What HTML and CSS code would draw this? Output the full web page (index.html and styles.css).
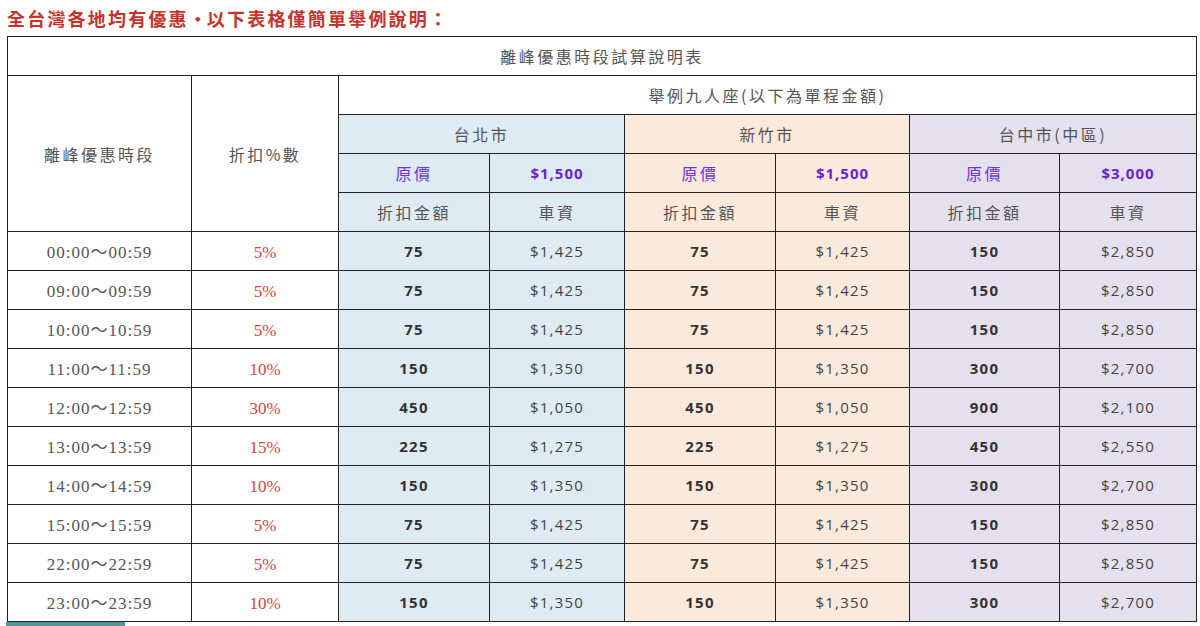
FILE: index.html
```html
<!DOCTYPE html>
<html lang="zh-Hant">
<head>
<meta charset="utf-8">
<title>離峰優惠時段試算說明表</title>
<link rel="stylesheet" href="styles.css">
</head>
<body>
<div class="page">
  <h2 class="notice">全台灣各地均有優惠<span class="dot">·</span>以下表格僅簡單舉例說明：</h2>
  <table class="fare">
    <colgroup>
      <col class="c-time"><col class="c-pct">
      <col class="c-a"><col class="c-b"><col class="c-a"><col class="c-b2"><col class="c-a2"><col class="c-b3">
    </colgroup>
    <tr><td colspan="8" class="hd">離峰優惠時段試算說明表</td></tr>
    <tr>
      <td rowspan="4" class="hd">離峰優惠時段</td>
      <td rowspan="4" class="hd">折扣%數</td>
      <td colspan="6" class="hd">舉例九人座(以下為單程金額)</td>
    </tr>
    <tr>
      <td colspan="2" class="hd blue">台北市</td>
      <td colspan="2" class="hd peach">新竹市</td>
      <td colspan="2" class="hd lav">台中市(中區)</td>
    </tr>
    <tr>
      <td class="hd blue purple">原價</td><td class="blue price">$1,500</td>
      <td class="hd peach purple">原價</td><td class="peach price">$1,500</td>
      <td class="hd lav purple">原價</td><td class="lav price">$3,000</td>
    </tr>
    <tr>
      <td class="hd blue">折扣金額</td><td class="hd blue">車資</td>
      <td class="hd peach">折扣金額</td><td class="hd peach">車資</td>
      <td class="hd lav">折扣金額</td><td class="hd lav">車資</td>
    </tr>
    <tr><td class="time">00:00～00:59</td><td class="pct">5%</td><td class="blue disc">75</td><td class="blue num">$1,425</td><td class="peach disc">75</td><td class="peach num">$1,425</td><td class="lav disc">150</td><td class="lav num">$2,850</td></tr>
    <tr><td class="time">09:00～09:59</td><td class="pct">5%</td><td class="blue disc">75</td><td class="blue num">$1,425</td><td class="peach disc">75</td><td class="peach num">$1,425</td><td class="lav disc">150</td><td class="lav num">$2,850</td></tr>
    <tr><td class="time">10:00～10:59</td><td class="pct">5%</td><td class="blue disc">75</td><td class="blue num">$1,425</td><td class="peach disc">75</td><td class="peach num">$1,425</td><td class="lav disc">150</td><td class="lav num">$2,850</td></tr>
    <tr><td class="time">11:00～11:59</td><td class="pct">10%</td><td class="blue disc">150</td><td class="blue num">$1,350</td><td class="peach disc">150</td><td class="peach num">$1,350</td><td class="lav disc">300</td><td class="lav num">$2,700</td></tr>
    <tr><td class="time">12:00～12:59</td><td class="pct">30%</td><td class="blue disc">450</td><td class="blue num">$1,050</td><td class="peach disc">450</td><td class="peach num">$1,050</td><td class="lav disc">900</td><td class="lav num">$2,100</td></tr>
    <tr><td class="time">13:00～13:59</td><td class="pct">15%</td><td class="blue disc">225</td><td class="blue num">$1,275</td><td class="peach disc">225</td><td class="peach num">$1,275</td><td class="lav disc">450</td><td class="lav num">$2,550</td></tr>
    <tr><td class="time">14:00～14:59</td><td class="pct">10%</td><td class="blue disc">150</td><td class="blue num">$1,350</td><td class="peach disc">150</td><td class="peach num">$1,350</td><td class="lav disc">300</td><td class="lav num">$2,700</td></tr>
    <tr><td class="time">15:00～15:59</td><td class="pct">5%</td><td class="blue disc">75</td><td class="blue num">$1,425</td><td class="peach disc">75</td><td class="peach num">$1,425</td><td class="lav disc">150</td><td class="lav num">$2,850</td></tr>
    <tr><td class="time">22:00～22:59</td><td class="pct">5%</td><td class="blue disc">75</td><td class="blue num">$1,425</td><td class="peach disc">75</td><td class="peach num">$1,425</td><td class="lav disc">150</td><td class="lav num">$2,850</td></tr>
    <tr><td class="time">23:00～23:59</td><td class="pct">10%</td><td class="blue disc">150</td><td class="blue num">$1,350</td><td class="peach disc">150</td><td class="peach num">$1,350</td><td class="lav disc">300</td><td class="lav num">$2,700</td></tr>
  </table>
  <div class="accent"></div>
</div>
</body>
</html>
```

FILE: styles.css
```css
html, body {
  margin: 0;
  padding: 0;
  background: #ffffff;
}
.page {
  padding: 4px 5px 0 7px;
}
.notice {
  margin: 0 0 4px 0;
  font-family: "Noto Sans CJK TC", "Noto Sans", sans-serif;
  font-size: 18px;
  line-height: 28px;
  font-weight: 700;
  letter-spacing: 2.2px;
  color: #c8322c;
}
.dot {
  display: inline-block;
  width: 18px;
  text-align: center;
}
.fare {
  border-collapse: collapse;
  table-layout: fixed;
  width: 1189px;
  border: 1px solid #222;
}
.c-time { width: 184px; }
.c-pct { width: 147px; }
.c-a { width: 151px; }
.c-b { width: 135px; }
.c-b2 { width: 134px; }
.c-a2 { width: 150px; }
.c-b3 { width: 137px; }
.fare tr { height: 39px; }
.fare td {
  border: 1px solid #222;
  padding: 0;
  text-align: center;
  vertical-align: middle;
  color: #555;
}
.hd {
  font-family: "Noto Sans CJK TC", "Noto Sans", sans-serif;
  font-size: 16px;
  letter-spacing: 2.5px;
}
.blue { background: #deebf2; }
.peach { background: #fbe9db; }
.lav { background: #e4e0ed; }
.purple { color: #6a35d8 !important; }
.price {
  font-family: "Open Sans", sans-serif;
  font-weight: 700;
  font-size: 15px;
  letter-spacing: 1px;
  color: #6a22d8 !important;
}
.time {
  font-family: "Liberation Serif", "Noto Sans CJK TC", serif;
  font-size: 17px;
  letter-spacing: 1px;
  color: #555 !important;
}
.fare td.time {
  padding-bottom: 2px;
}
.fare td.pct {
  padding-top: 3px;
}
.pct {
  font-family: "Liberation Serif", serif;
  font-size: 17px;
  color: #e0403a !important;
}
.disc {
  font-family: "Open Sans", sans-serif;
  font-weight: 700;
  font-size: 15px;
  letter-spacing: 1.2px;
  color: #333 !important;
}
.num {
  font-family: "Open Sans", sans-serif;
  font-size: 15px;
  letter-spacing: 1.2px;
  color: #444 !important;
}
.accent {
  width: 119px;
  height: 4px;
  margin-left: -1px;
  background: #4a9a9a;
}
```
